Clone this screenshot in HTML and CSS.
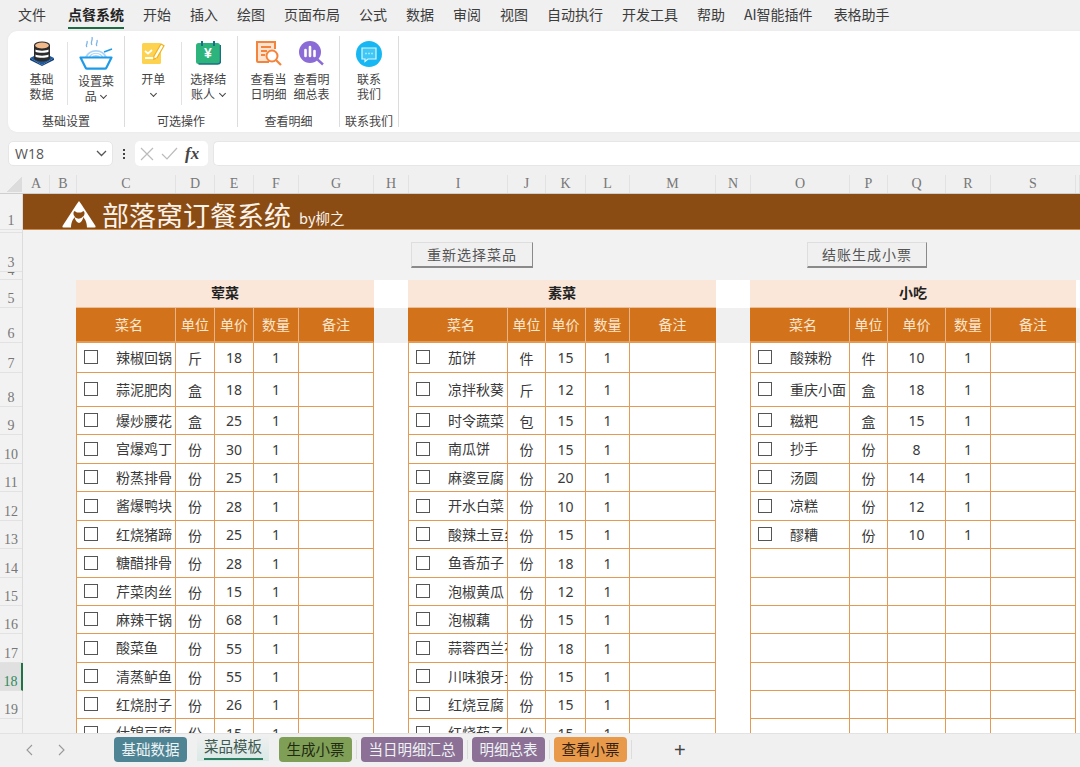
FILE: index.html
```html
<!DOCTYPE html>
<html lang="zh-CN">
<head>
  <meta charset="UTF-8" />
  <title>部落窝订餐系统</title>
  <link rel="stylesheet" href="styles.css">
</head>
<body>
<div class="app">
  <nav class="menu-tabs">
    <span>文件</span><span class="active">点餐系统</span><span>开始</span><span>插入</span><span>绘图</span><span>页面布局</span><span>公式</span><span>数据</span><span>审阅</span><span>视图</span><span>自动执行</span><span>开发工具</span><span>帮助</span><span>AI智能插件</span><span class="last">表格助手</span>
  </nav>

  <div class="ribbon">
    <div class="group group-base">
      <div class="tools">
        <div class="tool tool-db">
          <svg class="icon" width="26" height="25" viewBox="0 0 26 25">
            <path d="M1 17l12-6 12 6-12 7z" fill="#1f5a9e"/>
            <path d="M1 17v2l12 6 12-6v-2l-12 7z" fill="#123f78"/>
            <path d="M5 4v13c0 2 4 3.500 8 3.500s8-1.500 8-3.500V4z" fill="#2b2b2b"/>
            <path d="M6.500 8.500c2 1.500 11 1.500 13 0v2.200c-2 1.500-11 1.500-13 0zM6.500 13.500c2 1.500 11 1.500 13 0v2.200c-2 1.500-11 1.500-13 0z" fill="#fff"/>
            <ellipse cx="13" cy="4.500" rx="7.500" ry="3.500" fill="#f2b98a" stroke="#2b2b2b" stroke-width="1.200"/>
          </svg>
          <span>基础<br>数据</span>
        </div>
        <i class="sep"></i>
        <div class="tool tool-dish">
          <svg class="icon icon-dish" width="34" height="33" viewBox="0 0 34 33">
            <path d="M8 10c-2-2 1-3 0-6M13 8c-2-3 1-4 0-8M18 9c-2-2 1-3 0-6" fill="none" stroke="#7fb4e8" stroke-width="1.300"/>
            <path d="M6 20a11.500 10 0 0 1 22 0z" fill="#a9d4f7"/>
            <path d="M9 20a8.500 7 0 0 1 16 0M12 20a5.500 4.500 0 0 1 10 0" fill="none" stroke="#fff" stroke-width="1.100"/>
            <path d="M25 15l8-3" stroke="#1e9be8" stroke-width="1.500"/>
            <path d="M1.500 20.500h31l-5 10a2 2 0 0 1-2 1.200H8.500a2 2 0 0 1-2-1.200z" fill="#fff" stroke="#1e9be8" stroke-width="2.200" stroke-linejoin="round"/>
          </svg>
          <span>设置菜<br>品 <b class="caret"></b></span>
        </div>
      </div>
      <div class="group-name">基础设置</div>
    </div>

    <div class="group group-option">
      <div class="tools">
        <div class="tool tool-open">
          <svg class="icon" width="23" height="23" viewBox="0 0 23 23">
            <rect x="0" y="2" width="19" height="21" rx="1.500" fill="#fdd24f"/>
            <path d="M3 10l3 2.500 4-3.500M3 17h12" fill="none" stroke="#fff" stroke-width="1.800"/>
            <path d="M12 15l7-12 3 1.700-7 12-3.200 1.500z" fill="#fff" stroke="#f2b21c" stroke-width="1.200"/>
          </svg>
          <span>开单<br><b class="caret"></b></span>
        </div>
        <i class="sep"></i>
        <div class="tool tool-payer">
          <svg class="icon" width="25" height="24" viewBox="0 0 25 24">
            <rect x="0" y="2" width="24" height="21" rx="2.500" fill="#2db37c"/>
            <path d="M2.500 23h19a3 3 0 0 0 3-3V4" fill="none" stroke="#1a6f86" stroke-width="1.500"/>
            <path d="M6 0v5M18 0v5" stroke="#1a6f86" stroke-width="2"/>
            <text x="12" y="17" class="yen">¥</text>
          </svg>
          <span>选择结<br>账人 <b class="caret"></b></span>
        </div>
      </div>
      <div class="group-name">可选操作</div>
    </div>

    <div class="group group-detail">
      <div class="tools">
        <div class="tool tool-view">
          <svg class="icon" width="26" height="25" viewBox="0 0 26 25">
            <path d="M13 21H2a1 1 0 0 1-1-1V1h18v7" fill="#fde3d0" stroke="#f4843b" stroke-width="2"/>
            <path d="M5 6h10M5 10h6M5 14h4" stroke="#f4843b" stroke-width="2"/>
            <circle cx="16" cy="15" r="5.500" fill="#fff" stroke="#f4843b" stroke-width="2"/>
            <path d="M20 19l5 5" stroke="#f4843b" stroke-width="2.200"/>
          </svg>
          <span>查看当<br>日明细</span>
        </div>
        <div class="tool tool-view">
          <svg class="icon" width="25" height="25" viewBox="0 0 25 25">
            <circle cx="11" cy="11" r="11" fill="#8b6bd6"/>
            <path d="M6.500 9v6M11 6v9M15.500 10v5" stroke="#fff" stroke-width="2.600" stroke-linecap="round"/>
            <path d="M18.500 18.500l5.500 5" stroke="#8b6bd6" stroke-width="2.400"/>
          </svg>
          <span>查看明<br>细总表</span>
        </div>
      </div>
      <div class="group-name">查看明细</div>
    </div>

    <div class="group group-contact">
      <div class="tools">
        <div class="tool">
          <svg class="icon" width="26" height="26" viewBox="0 0 26 26">
            <circle cx="13" cy="13" r="13" fill="#16b7f2"/>
            <path d="M6 7h14v11h-8l-3 2.500V18H6z" fill="#3fc8f6" stroke="#dff6fe" stroke-width="1.200"/>
            <path d="M9.500 12.500h1M12.500 12.500h1M15.500 12.500h1" stroke="#fff" stroke-width="1.500"/>
          </svg>
          <span>联系<br>我们</span>
        </div>
      </div>
      <div class="group-name">联系我们</div>
    </div>
  </div>

  <div class="formula-bar">
    <div class="name-box">W18
      <svg width="11" height="7" viewBox="0 0 11 7"><path d="M1 1l4.500 4.500L10 1" fill="none" stroke="#555" stroke-width="1.300"/></svg>
    </div>
    <div class="dots"><i></i><i></i><i></i></div>
    <div class="fx-box">
      <svg width="14" height="14" viewBox="0 0 14 14"><path d="M1 1l12 12M13 1L1 13" stroke="#bbb" stroke-width="1.200"/></svg>
      <svg width="17" height="13" viewBox="0 0 17 13"><path d="M1 7l5 5L16 1" fill="none" stroke="#bbb" stroke-width="1.200"/></svg>
      <span class="fx">fx</span>
    </div>
    <div class="formula-input"></div>
  </div>

  <div class="col-heads">
    <div class="corner"></div>
    <div>A</div><div>B</div><div>C</div><div>D</div><div>E</div><div>F</div><div>G</div><div>H</div><div>I</div><div>J</div><div>K</div><div>L</div><div>M</div><div>N</div><div>O</div><div>P</div><div>Q</div><div>R</div><div>S</div><div></div>
  </div>

  <div class="sheet">
    <div class="row-heads">
      <div class="h36">1</div>
      <div class="h3">2</div>
      <div class="h39">3</div>
      <div class="h8">4</div>
      <div class="h28">5</div>
      <div class="h35">6</div>
      <div class="h30">7</div>
      <div class="h34">8</div>
      <div class="h28">9</div>
      <div class="h29">10</div>
      <div class="h28">11</div>
      <div class="h29">12</div>
      <div class="h28">13</div>
      <div class="h29">14</div>
      <div class="h28">15</div>
      <div class="h28">16</div>
      <div class="h29">17</div>
      <div class="h28 current">18</div>
      <div class="h28">19</div>
      <div class="h29">20</div>
    </div>

    <div class="sheet-main">
      <div class="banner">
        <svg class="logo" width="34" height="27" viewBox="0 0 34 27">
          <path d="M17 0l2.500 3.500L33.500 25q.5 1.500-1 1.500h-31q-1.500 0-1-1.500L14.500 3.500z" fill="#fff"/>
          <path d="M9 27c0-6 2-9 4-11-2-2-2-5-.5-6l2.500 1.500h4l2.500-1.500c1.500 1 1.500 4-.5 6 2 2 4 5 4 11z" fill="#8b4c14"/>
          <path d="M12.500 16q5 4 9-1-1 6-4.500 7-3.500-1-4.500-6z" fill="#fff"/>
        </svg>
        <span class="banner-title">部落窝订餐系统</span>
        <span class="banner-by">by柳之</span>
      </div>

      <div class="btn-row">
        <button class="sheet-btn btn-reset">重新选择菜品</button>
        <button class="sheet-btn btn-pay">结账生成小票</button>
      </div>

      <div class="menus">
        <table class="menu menu-meat">
          <colgroup><col class="c-name"><col class="c-39"><col class="c-39"><col class="c-45"><col class="c-75"></colgroup>
          <tr class="h28"><th class="menu-title" colspan="5">荤菜</th></tr>
          <tr class="h35 menu-head"><th class="name">菜名</th><th>单位</th><th>单价</th><th>数量</th><th>备注</th></tr>
          <tr class="h30"><td class="dish"><i class="chk"></i>辣椒回锅</td><td>斤</td><td>18</td><td>1</td><td></td></tr>
          <tr class="h34"><td class="dish"><i class="chk"></i>蒜泥肥肉</td><td>盒</td><td>18</td><td>1</td><td></td></tr>
          <tr class="h28"><td class="dish"><i class="chk"></i>爆炒腰花</td><td>盒</td><td>25</td><td>1</td><td></td></tr>
          <tr class="h29"><td class="dish"><i class="chk"></i>宫爆鸡丁</td><td>份</td><td>30</td><td>1</td><td></td></tr>
          <tr class="h28"><td class="dish"><i class="chk"></i>粉蒸排骨</td><td>份</td><td>25</td><td>1</td><td></td></tr>
          <tr class="h29"><td class="dish"><i class="chk"></i>酱爆鸭块</td><td>份</td><td>28</td><td>1</td><td></td></tr>
          <tr class="h28"><td class="dish"><i class="chk"></i>红烧猪蹄</td><td>份</td><td>25</td><td>1</td><td></td></tr>
          <tr class="h29"><td class="dish"><i class="chk"></i>糖醋排骨</td><td>份</td><td>28</td><td>1</td><td></td></tr>
          <tr class="h28"><td class="dish"><i class="chk"></i>芹菜肉丝</td><td>份</td><td>15</td><td>1</td><td></td></tr>
          <tr class="h28"><td class="dish"><i class="chk"></i>麻辣干锅</td><td>份</td><td>68</td><td>1</td><td></td></tr>
          <tr class="h29"><td class="dish"><i class="chk"></i>酸菜鱼</td><td>份</td><td>55</td><td>1</td><td></td></tr>
          <tr class="h28"><td class="dish"><i class="chk"></i>清蒸鲈鱼</td><td>份</td><td>55</td><td>1</td><td></td></tr>
          <tr class="h28"><td class="dish"><i class="chk"></i>红烧肘子</td><td>份</td><td>26</td><td>1</td><td></td></tr>
          <tr class="h29"><td class="dish"><i class="chk"></i>什锦豆腐</td><td>份</td><td>15</td><td>1</td><td></td></tr>
        </table>

        <table class="menu menu-veg">
          <colgroup><col class="c-name"><col class="c-38"><col class="c-40"><col class="c-44"><col class="c-86"></colgroup>
          <tr class="h28"><th class="menu-title" colspan="5">素菜</th></tr>
          <tr class="h35 menu-head"><th class="name">菜名</th><th>单位</th><th>单价</th><th>数量</th><th>备注</th></tr>
          <tr class="h30"><td class="dish"><i class="chk"></i>茄饼</td><td>件</td><td>15</td><td>1</td><td></td></tr>
          <tr class="h34"><td class="dish"><i class="chk"></i>凉拌秋葵</td><td>斤</td><td>12</td><td>1</td><td></td></tr>
          <tr class="h28"><td class="dish"><i class="chk"></i>时令蔬菜</td><td>包</td><td>15</td><td>1</td><td></td></tr>
          <tr class="h29"><td class="dish"><i class="chk"></i>南瓜饼</td><td>份</td><td>15</td><td>1</td><td></td></tr>
          <tr class="h28"><td class="dish"><i class="chk"></i>麻婆豆腐</td><td>份</td><td>20</td><td>1</td><td></td></tr>
          <tr class="h29"><td class="dish"><i class="chk"></i>开水白菜</td><td>份</td><td>10</td><td>1</td><td></td></tr>
          <tr class="h28"><td class="dish"><i class="chk"></i>酸辣土豆丝</td><td>份</td><td>15</td><td>1</td><td></td></tr>
          <tr class="h29"><td class="dish"><i class="chk"></i>鱼香茄子</td><td>份</td><td>18</td><td>1</td><td></td></tr>
          <tr class="h28"><td class="dish"><i class="chk"></i>泡椒黄瓜</td><td>份</td><td>12</td><td>1</td><td></td></tr>
          <tr class="h28"><td class="dish"><i class="chk"></i>泡椒藕</td><td>份</td><td>15</td><td>1</td><td></td></tr>
          <tr class="h29"><td class="dish"><i class="chk"></i>蒜蓉西兰花</td><td>份</td><td>18</td><td>1</td><td></td></tr>
          <tr class="h28"><td class="dish"><i class="chk"></i>川味狼牙土豆</td><td>份</td><td>15</td><td>1</td><td></td></tr>
          <tr class="h28"><td class="dish"><i class="chk"></i>红烧豆腐</td><td>份</td><td>15</td><td>1</td><td></td></tr>
          <tr class="h29"><td class="dish"><i class="chk"></i>红烧茄子</td><td>份</td><td>15</td><td>1</td><td></td></tr>
        </table>

        <table class="menu menu-snack">
          <colgroup><col class="c-name"><col class="c-38"><col class="c-58"><col class="c-45"><col class="c-85"></colgroup>
          <tr class="h28"><th class="menu-title" colspan="5">小吃</th></tr>
          <tr class="h35 menu-head"><th class="name">菜名</th><th>单位</th><th>单价</th><th>数量</th><th>备注</th></tr>
          <tr class="h30"><td class="dish"><i class="chk"></i>酸辣粉</td><td>件</td><td>10</td><td>1</td><td></td></tr>
          <tr class="h34"><td class="dish"><i class="chk"></i>重庆小面</td><td>盒</td><td>18</td><td>1</td><td></td></tr>
          <tr class="h28"><td class="dish"><i class="chk"></i>糍粑</td><td>盒</td><td>15</td><td>1</td><td></td></tr>
          <tr class="h29"><td class="dish"><i class="chk"></i>抄手</td><td>份</td><td>8</td><td>1</td><td></td></tr>
          <tr class="h28"><td class="dish"><i class="chk"></i>汤圆</td><td>份</td><td>14</td><td>1</td><td></td></tr>
          <tr class="h29"><td class="dish"><i class="chk"></i>凉糕</td><td>份</td><td>12</td><td>1</td><td></td></tr>
          <tr class="h28"><td class="dish"><i class="chk"></i>醪糟</td><td>份</td><td>10</td><td>1</td><td></td></tr>
          <tr class="h29"><td></td><td></td><td></td><td></td><td></td></tr>
          <tr class="h28"><td></td><td></td><td></td><td></td><td></td></tr>
          <tr class="h28"><td></td><td></td><td></td><td></td><td></td></tr>
          <tr class="h29"><td></td><td></td><td></td><td></td><td></td></tr>
          <tr class="h28"><td></td><td></td><td></td><td></td><td></td></tr>
          <tr class="h28"><td></td><td></td><td></td><td></td><td></td></tr>
          <tr class="h29"><td></td><td></td><td></td><td></td><td></td></tr>
        </table>
      </div>
    </div>
  </div>

  <div class="sheet-tabs">
    <div class="tab-nav">
      <svg width="8" height="12" viewBox="0 0 8 12"><path d="M7 1L2 6l5 5" fill="none" stroke="#999" stroke-width="1.100"/></svg>
      <svg width="8" height="12" viewBox="0 0 8 12"><path d="M1 1l5 5-5 5" fill="none" stroke="#999" stroke-width="1.100"/></svg>
    </div>
    <div class="tab tab-teal">基础数据</div>
    <div class="tab tab-active">菜品模板</div>
    <div class="tab tab-green">生成小票</div>
    <i class="tab-sep"></i>
    <div class="tab tab-purple tab-wide">当日明细汇总</div>
    <i class="tab-sep"></i>
    <div class="tab tab-purple">明细总表</div>
    <i class="tab-sep"></i>
    <div class="tab tab-orange">查看小票</div>
    <i class="tab-sep"></i>
    <div class="tab-add">+</div>
  </div>
</div>
</body>
</html>
```

FILE: styles.css
```css
* {
  box-sizing: border-box;
}
body {
  margin: 0;
  font-family: "Noto Sans CJK SC", "Noto Sans", sans-serif;
  color: #333;
  background-color: #f0f0f0;
}
.app {
  display: flex;
  flex-direction: column;
  width: 1080px;
  height: 767px;
  overflow: hidden;
}

/* top menu */
.menu-tabs {
  display: flex;
  gap: 19px;
  height: 31px;
  padding: 3px 0 0 18px;
  font-size: 14px;
  line-height: 23px;
  color: #3c3c3c;
  flex: none;
}
.menu-tabs span {
  height: 26px;
  white-space: nowrap;
}
.menu-tabs .active {
  margin-left: 3px;
  font-weight: bold;
  color: #222;
  border-bottom: 2px solid #1d6b42;
}
.menu-tabs .last {
  margin-left: 2px;
}

/* ribbon */
.ribbon {
  display: flex;
  flex: none;
  height: 101px;
  margin-left: 8px;
  padding-top: 5px;
  background: #fff;
  border-radius: 9px 0 0 9px;
  box-shadow: 0 0 2px #e4e4e4;
}
.group {
  display: flex;
  flex-direction: column;
  height: 91px;
  border-right: 1px solid #dcdcdc;
}
.group-base { width: 117px; }
.group-option { width: 113px; }
.group-detail { width: 102px; }
.group-contact { width: 59px; }
.tools {
  display: flex;
  flex: none;
  height: 75px;
  padding-top: 5px;
  justify-content: center;
}
.group-detail .tools {
  justify-content: flex-start;
  padding-left: 9px;
}
.tool {
  display: grid;
  grid-template-rows: 30px auto;
  justify-items: center;
  align-content: start;
  font-size: 12px;
  line-height: 15px;
  text-align: center;
  color: #444;
}
.tool-db { width: 59px; padding-left: 8px; }
.tool-dish { width: 56px; }
.tool-open { width: 56px; padding-left: 1px; }
.tool-payer { width: 54px; margin-right: 2px; }
.tool-view { width: 43px; }
.tool .icon-dish {
  margin-top: -4px;
}
.tool-dish span {
  margin-top: 2px;
}
.sep {
  width: 1px;
  height: 63px;
  margin-top: 1px;
  background: #e2e2e2;
  flex: none;
}
.caret {
  display: inline-block;
  width: 5px;
  height: 5px;
  margin: 0 1px 3px 2px;
  border-right: 1px solid #444;
  border-bottom: 1px solid #444;
  transform: rotate(45deg);
}
.group-name {
  font-size: 12px;
  line-height: 13px;
  padding-top: 3px;
  text-align: center;
  color: #444;
  white-space: nowrap;
}
.yen {
  font-family: "Liberation Sans", sans-serif;
  font-size: 14px;
  font-weight: bold;
  fill: #fff;
  text-anchor: middle;
}

/* formula bar */
.formula-bar {
  display: flex;
  flex: none;
  align-items: center;
  height: 25px;
  margin-top: 9px;
  padding-left: 8px;
}
.name-box {
  display: flex;
  align-items: center;
  justify-content: space-between;
  width: 105px;
  height: 25px;
  padding: 0 5px 0 6px;
  font-family: "Open Sans", sans-serif;
  font-size: 14px;
  color: #555;
  background: #fff;
  border-radius: 5px;
  border: 1px solid #e6e6e6;
}
.dots {
  display: flex;
  flex-direction: column;
  gap: 2px;
  width: 22px;
  align-items: center;
}
.dots i {
  width: 2px;
  height: 2px;
  background: #444;
}
.fx-box {
  display: flex;
  align-items: center;
  gap: 7px;
  width: 73px;
  height: 25px;
  padding-left: 5px;
  background: #fff;
  border-radius: 5px;
}
.fx {
  font-family: "Liberation Serif", serif;
  font-size: 17px;
  font-style: italic;
  font-weight: bold;
  color: #444;
  line-height: 20px;
}
.formula-input {
  flex: 1;
  height: 25px;
  margin-left: 5px;
  background: #fff;
  border-radius: 5px 0 0 5px;
  border: 1px solid #e6e6e6;
  border-right: 0;
}

/* column letters */
.col-heads {
  display: grid;
  flex: none;
  grid-template-columns: 23px 27px 27px 99px 39px 39px 45px 75px 35px 99px 38px 40px 44px 86px 35px 99px 38px 58px 45px 85px 1fr;
  height: 19px;
  margin-top: 9px;
  font-family: "Liberation Serif", serif;
  font-size: 14px;
  line-height: 17px;
  color: #777;
  text-align: center;
  border-bottom: 1px solid #cfcfcf;
}
.col-heads div {
  border-right: 1px solid #e2e2e2;
}
.corner {
  background: linear-gradient(135deg, transparent 50%, #dcdcdc 50%);
  margin: 2px 1px 1px 6px;
  border-right: 0 !important;
}

/* sheet */
.sheet {
  display: flex;
  flex: none;
  height: 539px;
  overflow: hidden;
  background: #f2f2f2;
}
.row-heads {
  width: 23px;
  flex: none;
  font-family: "Liberation Serif", serif;
  font-size: 14px;
  color: #777;
  text-align: center;
  border-right: 1px solid #dcdcdc;
}
.row-heads div {
  display: flex;
  align-items: flex-end;
  justify-content: center;
  overflow: hidden;
  line-height: 16px;
  border-bottom: 1px solid #e2e2e2;
}
.row-heads .current {
  color: #2f8a5b;
  background: #e0e0e0;
  border-right: 2px solid #217346;
  margin-right: -1px;
}
.h3 { height: 3px; }
.h8 { height: 8px; }
.h28 { height: 28px; }
.h29 { height: 29px; }
.h30 { height: 30px; }
.h34 { height: 34px; }
.h35 { height: 35px; }
.h36 { height: 36px; }
.h39 { height: 39px; }
.sheet-main {
  flex: 1;
  min-width: 0;
}
.banner {
  display: flex;
  align-items: center;
  height: 36px;
  padding-left: 39px;
  color: #fff;
  background: #8b4c14;
  border-bottom: 1px solid #c98a4e;
}
.logo {
  flex: none;
  margin-top: 5px;
}
.banner-title {
  margin: 7px 0 0 6px;
  font-size: 27px;
  line-height: 36px;
  color: #fbf3ea;
}
.banner-by {
  margin: 12px 0 0 8px;
  font-size: 14.500px;
  line-height: 20px;
  color: #fbf3ea;
}
.btn-row {
  display: flex;
  gap: 274px;
  height: 50px;
  padding: 12px 0 0 388px;
}
.sheet-btn {
  height: 26px;
  padding: 0 0 2px;
  font-family: inherit;
  font-size: 14px;
  letter-spacing: 1px;
  color: #555;
  background: #f0f0f0;
  border: 1px solid #dedede;
  border-right-color: #8a8a8a;
  border-bottom: 2px solid #8a8a8a;
}
.btn-reset { width: 122px; }
.btn-pay { width: 120px; }
.menus {
  display: flex;
  gap: 34px;
  margin-left: 53px;
  background: linear-gradient(#fff 28px, #f0f0f0 28px, #f0f0f0 63px, #fff 63px);
}
.menu {
  flex: none;
  table-layout: fixed;
  border-collapse: separate;
  border-spacing: 0;
  background: #fff;
}
.menu-meat { width: 298px; }
.menu-veg { width: 308px; }
.menu-snack { width: 326px; }
.c-name { width: 100px; }
.c-38 { width: 38px; }
.c-39 { width: 39px; }
.c-40 { width: 40px; }
.c-44 { width: 44px; }
.c-45 { width: 45px; }
.c-58 { width: 58px; }
.c-75 { width: 75px; }
.c-85 { width: 85px; }
.c-86 { width: 86px; }
.menu td {
  padding: 0;
  font-size: 14px;
  font-family: "Noto Sans", "Noto Sans CJK SC", sans-serif;
  text-align: center;
  color: #3a3a3a;
  border-right: 1px solid #e39a55;
  border-bottom: 1px solid #e39a55;
  white-space: nowrap;
  overflow: hidden;
}
.menu td:first-child {
  border-left: 1px solid #e39a55;
}
.menu td.dish {
  padding-left: 7px;
  text-align: left;
  font-family: "Noto Sans CJK SC", sans-serif;
}
.chk {
  display: inline-block;
  width: 14px;
  height: 14px;
  margin: 0 18px 4px 0;
  border: 1px solid #555;
  vertical-align: middle;
}
.menu-title {
  padding: 0 0 3px;
  font-size: 14px;
  color: #222;
  background: #fbe7d9;
  border-bottom: 1px solid #eebf95;
}
.menu-head th {
  padding: 0 0 2px;
  font-size: 14px;
  font-weight: normal;
  color: #fbe6cf;
  background: #d2731c;
  border-right: 1px solid #e6b488;
  border-bottom: 2px solid #e39a55;
}
.menu-head th:last-child {
  border-right-color: #d2731c;
}
.menu-head .name {
  padding-left: 7px;
}

/* sheet tabs */
.sheet-tabs {
  display: flex;
  flex: 1;
  align-items: center;
  padding: 0 0 2px 25px;
  background: #f0f0f0;
  border-top: 1px solid #e2e2e2;
}
.tab-nav {
  display: flex;
  gap: 25px;
  width: 89px;
}
.tab {
  width: 73px;
  height: 25px;
  font-size: 14.500px;
  line-height: 24px;
  text-align: center;
  border-radius: 4px;
  color: #eef4f5;
  white-space: nowrap;
}
.tab-teal { background: #4f8494; margin-right: 10px; }
.tab-active {
  width: 72px;
  margin: -3px 10px 0 0;
  height: 26px;
  line-height: 21px;
  color: #3f5a50;
  background: linear-gradient(#f0f0f0, #d9e9e6);
  position: relative;
  border-radius: 4px 4px 0 0;
}
.tab-active::after {
  content: "";
  position: absolute;
  left: 7px;
  right: 6px;
  bottom: 1px;
  height: 2px;
  background: #2a8060;
}
.tab-green { background: #7f9f57; color: #1f2a10; }
.tab-purple { background: #8c7096; }
.tab-wide { width: 102px; }
.tab-orange { background: #e8994a; color: #332010; }
.tab-sep {
  width: 1px;
  height: 19px;
  margin: 0 4px;
  background: #dcdcdc;
}
.tab-add {
  margin-left: 38px;
  font-family: "Liberation Sans", sans-serif;
  font-size: 20px;
  line-height: 24px;
  color: #444;
}
```
